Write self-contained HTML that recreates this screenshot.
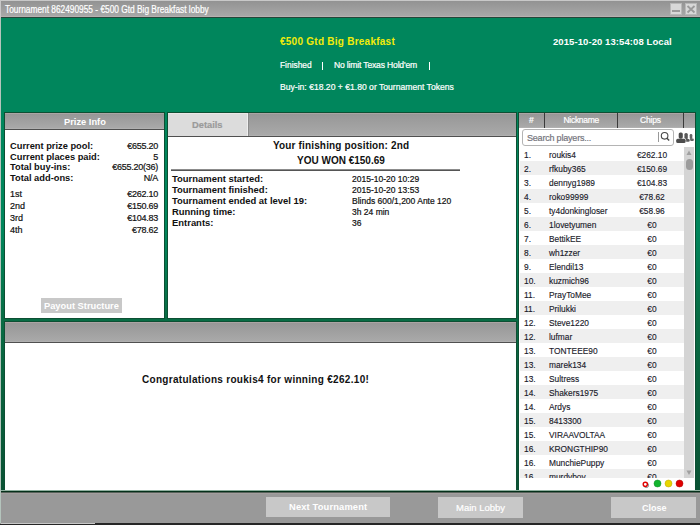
<!DOCTYPE html>
<html><head><meta charset="utf-8">
<style>
*{margin:0;padding:0;box-sizing:border-box}
html,body{width:700px;height:525px;overflow:hidden}
body{position:relative;background:#999999;font-family:"Liberation Sans",sans-serif;font-size:9px;color:#111}
.a{position:absolute}
.t{position:absolute;white-space:nowrap;line-height:12px;-webkit-text-stroke:0.2px currentColor}
.b{-webkit-text-stroke:0}
.b{font-weight:bold;-webkit-text-stroke:0 !important}
.w{color:#fff}
.dg{background:#0d4f33}
.hd{background:linear-gradient(to bottom,#aca4a4 0,#aca4a4 1px,#979797 1px,#a9a9a9 calc(100% - 1px),#b0b0b0 calc(100% - 1px))}
.r{position:absolute;left:0;width:164px;height:14px;font-size:9.7px;line-height:14px;color:#1a1a2a;white-space:nowrap;-webkit-text-stroke:0.15px currentColor}
.r span{position:absolute;top:1px;transform:scaleX(0.862);transform-origin:0 0}
.n{left:4px}.m{left:29px}.c{left:92px;width:80px;text-align:center;transform-origin:40px 0 !important}
</style></head><body>
<!-- window border / title bar -->
<div class="a" style="left:0;top:0;width:700px;height:1px;background:#c8c8c8"></div>
<div class="a" style="left:0;top:0;width:1px;height:18px;background:#c8c8c8"></div>
<div class="a" style="left:0;top:18px;width:1px;height:505px;background:#b4c4bc"></div>
<div class="a" style="left:1px;top:1px;width:699px;height:15px;background:linear-gradient(to bottom,#929292,#a8a8a8)"></div>
<div class="a" style="left:1px;top:16px;width:699px;height:1px;background:#b8b0b0"></div>
<div class="a" style="left:1px;top:17px;width:699px;height:1px;background:#24463a"></div>
<div class="t w" style="left:5px;top:4px;font-size:10px;transform:scaleX(0.833);transform-origin:0 0">Tournament 862490955 - €500 Gtd Big Breakfast lobby</div>
<!-- min / close -->
<div class="a" style="left:670px;top:3px;width:12px;height:12px;background:#d8d8d8;border:1px solid #b8b8b8"></div>
<div class="a" style="left:672px;top:10px;width:8px;height:2px;background:#9a9a9a"></div>
<div class="a" style="left:685px;top:3px;width:12px;height:12px;background:#d8d8d8;border:1px solid #b8b8b8"></div>
<svg class="a" style="left:685px;top:3px" width="12" height="12"><path d="M2.5 3 L9.5 9.5 M9.5 3 L2.5 9.5" stroke="#9a9a9a" stroke-width="1.8"/></svg>

<!-- green area -->
<div class="a" style="left:1px;top:18px;width:699px;height:473px;background:linear-gradient(to bottom,#00865c 0,#00865c 212px,#086c44 302px,#0a5234 473px)"></div>

<!-- header text -->
<div class="t b" style="left:280px;top:36px;font-size:10px;letter-spacing:0.25px;color:#f2ec0a">€500 Gtd Big Breakfast</div>
<div class="t b w" style="left:553px;top:36px;font-size:9.5px;letter-spacing:0.08px">2015-10-20 13:54:08 Local</div>
<div class="t w" style="left:280px;top:59px;font-size:8.4px">Finished</div>
<div class="a" style="left:322px;top:62px;width:1px;height:8px;background:#fff"></div>
<div class="t w" style="left:334px;top:59px;font-size:8.6px;letter-spacing:-0.18px">No limit Texas Hold'em</div>
<div class="a" style="left:429px;top:62px;width:1px;height:8px;background:#fff"></div>
<div class="t w" style="left:280px;top:81px;font-size:8.6px">Buy-in: €18.20 + €1.80 or Tournament Tokens</div>

<!-- Prize info panel -->
<div class="a dg" style="left:4px;top:112px;width:161px;height:207px"></div>
<div class="a hd" style="left:5px;top:113px;width:159px;height:16px"></div>
<div class="a" style="left:5px;top:129px;width:159px;height:1px;background:#505050"></div>
<div class="a" style="left:5px;top:130px;width:159px;height:188px;background:#fff"></div>
<div class="t b w" style="left:64px;top:116px;font-size:9.3px">Prize Info</div>


<div class="t b" style="left:10px;top:140px;font-size:9.3px">Current prize pool:</div>
<div class="t b" style="left:10px;top:151px;font-size:9.3px">Current places paid:</div>
<div class="t b" style="left:10px;top:161px;font-size:9.3px">Total buy-ins:</div>
<div class="t b" style="left:10px;top:172px;font-size:9.3px">Total add-ons:</div>
<div class="t" style="letter-spacing:-0.25px;right:542px;top:140px;font-size:9px">€655.20</div>
<div class="t" style="letter-spacing:-0.25px;right:542px;top:151px;font-size:9px">5</div>
<div class="t" style="letter-spacing:-0.25px;right:542px;top:161px;font-size:9px">€655.20(36)</div>
<div class="t" style="letter-spacing:-0.25px;right:542px;top:172px;font-size:9px">N/A</div>
<div class="t" style="left:10px;top:188px;font-size:9px">1st</div>
<div class="t" style="left:10px;top:200px;font-size:9px">2nd</div>
<div class="t" style="left:10px;top:212px;font-size:9px">3rd</div>
<div class="t" style="left:10px;top:224px;font-size:9px">4th</div>
<div class="t" style="letter-spacing:-0.25px;right:542px;top:188px;font-size:9px">€262.10</div>
<div class="t" style="letter-spacing:-0.25px;right:542px;top:200px;font-size:9px">€150.69</div>
<div class="t" style="letter-spacing:-0.25px;right:542px;top:212px;font-size:9px">€104.83</div>
<div class="t" style="letter-spacing:-0.25px;right:542px;top:224px;font-size:9px">€78.62</div>
<div class="a" style="left:41px;top:298px;width:81px;height:15px;background:#c8c8c8"></div>
<div class="t b w" style="left:44px;top:300px;font-size:9.3px">Payout Structure</div>

<!-- Details panel -->
<div class="a dg" style="left:167px;top:112px;width:350px;height:207px"></div>
<div class="a hd" style="left:168px;top:113px;width:348px;height:23px"></div>
<div class="a" style="left:168px;top:113px;width:80px;height:23px;background:#dcdcdc;border-top:1px solid #ece6e6;border-right:1px solid #eeeeee"></div>
<div class="a" style="left:248px;top:113px;width:1px;height:23px;background:#8a8a8a"></div>
<div class="a" style="left:168px;top:136px;width:348px;height:1px;background:#505050"></div>
<div class="a" style="left:168px;top:137px;width:348px;height:181px;background:#fff"></div>
<div class="t" style="left:192px;top:119px;font-size:9.3px;color:#9a9a9a;font-weight:bold">Details</div>
<div class="t b" style="left:273px;top:140px;font-size:10px;letter-spacing:0.15px">Your finishing position: 2nd</div>
<div class="t b" style="left:297px;top:155px;font-size:10px">YOU WON €150.69</div>
<div class="a" style="left:171px;top:169px;width:289px;height:2px;background:linear-gradient(#8c8c8c 50%,#555 50%)"></div>
<div class="t b" style="left:172px;top:173px;font-size:9.45px">Tournament started:</div>
<div class="t b" style="left:172px;top:184px;font-size:9.45px">Tournament finished:</div>
<div class="t b" style="left:172px;top:195px;font-size:9.45px">Tournament ended at level 19:</div>
<div class="t b" style="left:172px;top:206px;font-size:9.45px">Running time:</div>
<div class="t b" style="left:172px;top:217px;font-size:9.45px">Entrants:</div>
<div class="t" style="left:352px;top:173px;font-size:8.5px">2015-10-20 10:29</div>
<div class="t" style="left:352px;top:184px;font-size:8.5px">2015-10-20 13:53</div>
<div class="t" style="left:352px;top:195px;font-size:8.5px">Blinds 600/1,200 Ante 120</div>
<div class="t" style="left:352px;top:206px;font-size:8.5px">3h 24 min</div>
<div class="t" style="left:352px;top:217px;font-size:8.5px">36</div>

<!-- Bottom panel -->
<div class="a dg" style="left:4px;top:321px;width:513px;height:170px"></div>
<div class="a hd" style="left:5px;top:322px;width:511px;height:20px"></div>
<div class="a" style="left:5px;top:342px;width:511px;height:1px;background:#505050"></div>
<div class="a" style="left:5px;top:343px;width:511px;height:147px;background:#fff"></div>
<div class="t b" style="left:142px;top:374px;font-size:10px;letter-spacing:0.3px">Congratulations roukis4 for winning €262.10!</div>

<!-- Right panel -->
<div class="a dg" style="left:518px;top:112px;width:178px;height:379px"></div>
<div class="a hd" style="left:519px;top:113px;width:176px;height:15px"></div>
<div class="a" style="left:544px;top:113px;width:1px;height:15px;background:#3a3a3a"></div>
<div class="a" style="left:617px;top:113px;width:1px;height:15px;background:#3a3a3a"></div>
<div class="a" style="left:683px;top:113px;width:1px;height:15px;background:#3a3a3a"></div>
<div class="a" style="left:519px;top:128px;width:176px;height:362px;background:#fff"></div>
<div class="t w" style="left:529px;top:114px;font-size:8.5px">#</div>
<div class="t w" style="left:563.5px;top:114px;font-size:8.5px;letter-spacing:-0.3px">Nickname</div>
<div class="t w" style="left:640px;top:114px;font-size:8.5px;letter-spacing:-0.2px">Chips</div>
<div class="a" style="left:522px;top:129px;width:152px;height:17px;border:1px solid #b4b4b4;border-radius:3px;background:#fff"></div>
<div class="t" style="left:527px;top:132px;font-size:9px;letter-spacing:-0.2px;color:#74747c">Search players...</div>
<div class="a" style="left:658px;top:132px;width:1px;height:10px;background:#999"></div>
<svg class="a" style="left:660px;top:131px" width="11" height="12"><circle cx="4.6" cy="4.8" r="3.3" fill="none" stroke="#484848" stroke-width="1.1"/><path d="M6.9 7.2 L9.2 9.6" stroke="#484848" stroke-width="1.4"/></svg>
<svg class="a" style="left:674px;top:130px" width="22" height="15"><g fill="#666"><rect x="15.7" y="4" width="2.6" height="5" rx="1.2"/><rect x="16" y="8.6" width="3.8" height="2.3" rx="1"/></g><g fill="#fff" stroke="#fff" stroke-width="1.2"><rect x="10.4" y="3.1" width="3.4" height="6.3" rx="1.5"/><rect x="10.5" y="9.0" width="5.2" height="2.8" rx="1.3"/></g><g fill="#585858"><rect x="10.4" y="3.1" width="3.4" height="6.3" rx="1.5"/><rect x="10.5" y="9.0" width="5.2" height="2.8" rx="1.3"/></g><g fill="#fff" stroke="#fff" stroke-width="1.2"><rect x="4.7" y="2.5" width="4.1" height="6.2" rx="1.6"/><rect x="2.2" y="8.8" width="9.4" height="4.1" rx="1.5"/></g><g fill="#4c4c4c"><rect x="4.7" y="2.5" width="4.1" height="6.2" rx="1.6"/><rect x="2.2" y="8.8" width="9.4" height="4.1" rx="1.5"/></g></svg>
<div id="list" class="a" style="left:520px;top:147px;width:164px;height:331px;overflow:hidden">
<div class="r" style="top:0px;background:#fff"><span class="n">1.</span><span class="m">roukis4</span><span class="c">€262.10</span></div>
<div class="r" style="top:14px;background:#efefef"><span class="n">2.</span><span class="m">rfkuby365</span><span class="c">€150.69</span></div>
<div class="r" style="top:28px;background:#fff"><span class="n">3.</span><span class="m">dennyg1989</span><span class="c">€104.83</span></div>
<div class="r" style="top:42px;background:#efefef"><span class="n">4.</span><span class="m">roko99999</span><span class="c">€78.62</span></div>
<div class="r" style="top:56px;background:#fff"><span class="n">5.</span><span class="m">ty4donkingloser</span><span class="c">€58.96</span></div>
<div class="r" style="top:70px;background:#efefef"><span class="n">6.</span><span class="m">1lovetyumen</span><span class="c">€0</span></div>
<div class="r" style="top:84px;background:#fff"><span class="n">7.</span><span class="m">BettikEE</span><span class="c">€0</span></div>
<div class="r" style="top:98px;background:#efefef"><span class="n">8.</span><span class="m">wh1zzer</span><span class="c">€0</span></div>
<div class="r" style="top:112px;background:#fff"><span class="n">9.</span><span class="m">Elendil13</span><span class="c">€0</span></div>
<div class="r" style="top:126px;background:#efefef"><span class="n">10.</span><span class="m">kuzmich96</span><span class="c">€0</span></div>
<div class="r" style="top:140px;background:#fff"><span class="n">11.</span><span class="m">PrayToMee</span><span class="c">€0</span></div>
<div class="r" style="top:154px;background:#efefef"><span class="n">11.</span><span class="m">Prilukki</span><span class="c">€0</span></div>
<div class="r" style="top:168px;background:#fff"><span class="n">12.</span><span class="m">Steve1220</span><span class="c">€0</span></div>
<div class="r" style="top:182px;background:#efefef"><span class="n">12.</span><span class="m">lufmar</span><span class="c">€0</span></div>
<div class="r" style="top:196px;background:#fff"><span class="n">13.</span><span class="m">TONTEEE90</span><span class="c">€0</span></div>
<div class="r" style="top:210px;background:#efefef"><span class="n">13.</span><span class="m">marek134</span><span class="c">€0</span></div>
<div class="r" style="top:224px;background:#fff"><span class="n">13.</span><span class="m">Sultress</span><span class="c">€0</span></div>
<div class="r" style="top:238px;background:#efefef"><span class="n">14.</span><span class="m">Shakers1975</span><span class="c">€0</span></div>
<div class="r" style="top:252px;background:#fff"><span class="n">14.</span><span class="m">Ardys</span><span class="c">€0</span></div>
<div class="r" style="top:266px;background:#efefef"><span class="n">15.</span><span class="m">8413300</span><span class="c">€0</span></div>
<div class="r" style="top:280px;background:#fff"><span class="n">15.</span><span class="m">VIRAAVOLTAA</span><span class="c">€0</span></div>
<div class="r" style="top:294px;background:#efefef"><span class="n">16.</span><span class="m">KRONGTHIP90</span><span class="c">€0</span></div>
<div class="r" style="top:308px;background:#fff"><span class="n">16.</span><span class="m">MunchiePuppy</span><span class="c">€0</span></div>
<div class="r" style="top:322px;background:#efefef"><span class="n">16.</span><span class="m">murdyboy</span><span class="c">€0</span></div>
</div>
<div class="a" style="left:684px;top:147px;width:10px;height:331px;background:#d4d4d4"></div>
<svg class="a" style="left:684px;top:147px" width="10" height="331"><path d="M2.5 8 L5 3.5 L7.5 8Z" fill="#a0a0a0"/><rect x="2" y="12" width="7" height="11" rx="3.5" fill="#9c9c9c"/><path d="M2.5 323.5 L5 328 L7.5 323.5Z" fill="#a0a0a0"/></svg>
<svg class="a" style="left:640px;top:478px" width="50" height="12">
<circle cx="6.2" cy="7.2" r="2.4" fill="none" stroke="#8a8a8a" stroke-width="1"/>
<circle cx="5.3" cy="6.3" r="2.1" fill="#fff" stroke="#e00000" stroke-width="1.4"/>
<circle cx="17.5" cy="5.5" r="3.5" fill="#12b42e" stroke="#0c8a22" stroke-width="0.5"/>
<circle cx="28.5" cy="5.5" r="3.5" fill="#e8d600" stroke="#b8a400" stroke-width="0.5"/>
<circle cx="39.5" cy="5.5" r="3.5" fill="#e00000" stroke="#a80000" stroke-width="0.5"/>
</svg>

<!-- bottom bar -->
<div class="a" style="left:1px;top:523px;width:94px;height:1px;background:#c8c8c8"></div>
<div class="a" style="left:95px;top:523px;width:605px;height:2px;background:#262626"></div>
<div class="a" style="left:0;top:524px;width:95px;height:1px;background:#262626"></div>
<div class="a" style="left:1px;top:490px;width:699px;height:1px;background:#8fb09f"></div>
<div class="a" style="left:1px;top:491px;width:699px;height:1px;background:#05301a"></div>
<div class="a" style="left:1px;top:492px;width:699px;height:1px;background:#56625a"></div>
<div class="a" style="left:1px;top:493px;width:699px;height:1px;background:#a49e9e"></div>
<div class="a" style="left:266px;top:497px;width:124px;height:20px;background:#c8c8c8"></div>
<div class="t b w" style="left:289px;top:501px;font-size:9.3px;letter-spacing:0.17px">Next Tournament</div>
<div class="a" style="left:438px;top:497px;width:85px;height:21px;background:#c8c8c8"></div>
<div class="t w" style="left:456px;top:502px;font-size:9.5px">Main Lobby</div>
<div class="a" style="left:611px;top:497px;width:85px;height:21px;background:#c8c8c8"></div>
<div class="t b w" style="left:642px;top:502px;font-size:9px">Close</div>

</body></html>
